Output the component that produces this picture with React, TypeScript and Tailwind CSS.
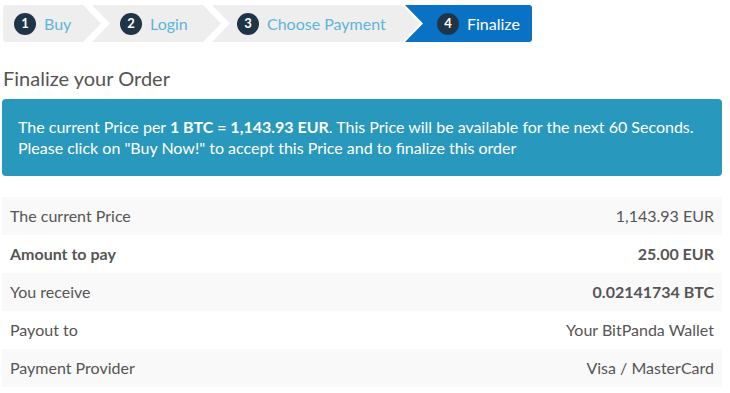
const steps = [
  { n: 1, label: "Buy" },
  { n: 2, label: "Login" },
  { n: 3, label: "Choose Payment" },
  { n: 4, label: "Finalize" },
];

const rows = [
  { label: "The current Price", value: "1,143.93 EUR", boldLabel: false, boldValue: false },
  { label: "Amount to pay", value: "25.00 EUR", boldLabel: true, boldValue: true },
  { label: "You receive", value: "0.02141734 BTC", boldLabel: false, boldValue: true },
  { label: "Payout to", value: "Your BitPanda Wallet", boldLabel: false, boldValue: false },
  { label: "Payment Provider", value: "Visa / MasterCard", boldLabel: false, boldValue: false },
];

function StepBadge({ n }: { n: number }) {
  return (
    <span className="flex h-[22px] w-[22px] shrink-0 items-center justify-center rounded-full bg-[#1f3447] text-[13px] font-bold text-white">
      {n}
    </span>
  );
}

export default function App() {
  return (
    <div className="min-h-screen w-[730px] bg-white font-['Lato','Open_Sans',sans-serif] text-[#555]">
      {/* Wizard steps */}
      <div className="flex pl-[3px] pt-[5px]">
        <div className="flex h-[37px] w-[98px] items-center gap-2 rounded-l-[3px] bg-[#eeeeee] pl-[11px] [clip-path:polygon(0_0,calc(100%_-_18px)_0,100%_50%,calc(100%_-_18px)_100%,0_100%)]">
          <StepBadge n={1} />
          <span className="text-[16px] text-[#5fb4d9]">{steps[0].label}</span>
        </div>
        <div className="-ml-[9px] flex h-[37px] w-[129px] items-center gap-2 bg-[#eeeeee] pl-[28px] [clip-path:polygon(0_0,calc(100%_-_18px)_0,100%_50%,calc(100%_-_18px)_100%,0_100%,18px_50%)]">
          <StepBadge n={2} />
          <span className="text-[16px] text-[#5fb4d9]">{steps[1].label}</span>
        </div>
        <div className="-ml-[9px] flex h-[37px] w-[208px] items-center gap-2 bg-[#eeeeee] pl-[25px] [clip-path:polygon(0_0,calc(100%_-_18px)_0,100%_50%,calc(100%_-_18px)_100%,0_100%,18px_50%)]">
          <StepBadge n={3} />
          <span className="text-[16px] text-[#5fb4d9]">{steps[2].label}</span>
        </div>
        <div className="-ml-[15px] flex h-[37px] w-[127px] items-center gap-2 rounded-r-[3px] bg-[#0a72c4] pl-[32px] [clip-path:polygon(0_0,100%_0,100%_100%,0_100%,18px_50%)]">
          <StepBadge n={4} />
          <span className="text-[16px] text-white">{steps[3].label}</span>
        </div>
      </div>

      <div className="px-[2px]">
        <h2 className="mt-[23px] pl-[1px] text-[20px] leading-[26px] text-[#555]">Finalize your Order</h2>

        <div className="mt-[8px] w-[720px] rounded-[4px] bg-[#2898bc] px-[16px] pt-[17px] pb-[18px] text-[16px] leading-[21px] text-white">
          The current Price per <b>1 BTC = 1,143.93 EUR</b>. This Price will be available for the next 60 Seconds.
          <br />
          Please click on "Buy Now!" to accept this Price and to finalize this order
        </div>

        <div className="mt-[21px] w-[720px] text-[16px]">
          {rows.map((r, i) => (
            <div
              key={r.label}
              className={`flex h-[38px] items-center justify-between px-[8px] ${i % 2 === 0 ? "bg-[#f9f9f9]" : "bg-white"}`}
            >
              <span className={r.boldLabel ? "font-bold" : ""}>{r.label}</span>
              <span className={r.boldValue ? "font-bold" : ""}>{r.value}</span>
            </div>
          ))}
        </div>
      </div>
    </div>
  );
}
